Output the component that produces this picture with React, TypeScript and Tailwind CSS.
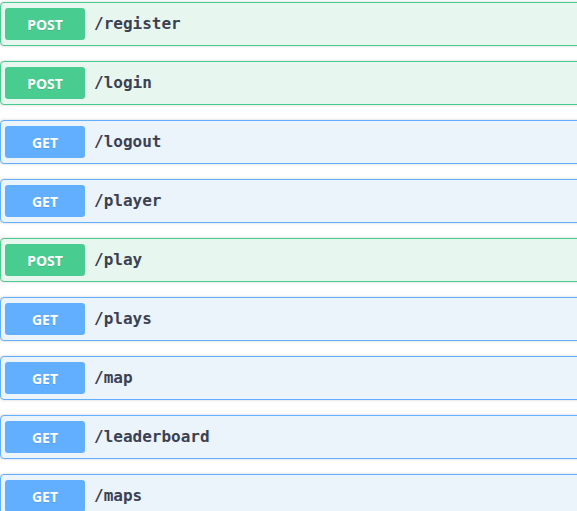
import React from "react";

const ops: { m: "POST" | "GET"; p: string }[] = [
  { m: "POST", p: "/register" },
  { m: "POST", p: "/login" },
  { m: "GET", p: "/logout" },
  { m: "GET", p: "/player" },
  { m: "POST", p: "/play" },
  { m: "GET", p: "/plays" },
  { m: "GET", p: "/map" },
  { m: "GET", p: "/leaderboard" },
  { m: "GET", p: "/maps" },
];

export default function App() {
  return (
    <div className="w-[577px] h-[511px] overflow-hidden bg-white pt-[2px]">
      <div className="w-[640px] flex flex-col gap-[15px]">
        {ops.map((o, i) => {
          const post = o.m === "POST";
          return (
            <div
              key={i}
              className={
                post
                  ? "rounded-[4px] border border-[#49cc90] bg-[#e8f6f0] shadow-[0_0_3px_rgba(0,0,0,0.19)]"
                  : "rounded-[4px] border border-[#61affe] bg-[#ebf3fb] shadow-[0_0_3px_rgba(0,0,0,0.19)]"
              }
            >
              <div className="flex items-center py-[5px] pl-[4px] pr-[5px]">
                <span
                  className={
                    (post ? "bg-[#49cc90]" : "bg-[#61affe]") +
                    " min-w-[80px] h-[32px] flex items-center justify-center rounded-[3px] text-white text-[14px] font-bold [text-shadow:0_1px_0_rgba(0,0,0,0.1)]"
                  }
                  style={{ fontFamily: "'Noto Sans', 'Open Sans', sans-serif" }}
                >
                  {o.m}
                </span>
                <span
                  className="pl-[9px] pr-[10px] text-[16px] font-semibold text-[#3b4151]"
                  style={{ fontFamily: "'DejaVu Sans Mono', monospace" }}
                >
                  {o.p}
                </span>
              </div>
            </div>
          );
        })}
      </div>
    </div>
  );
}
